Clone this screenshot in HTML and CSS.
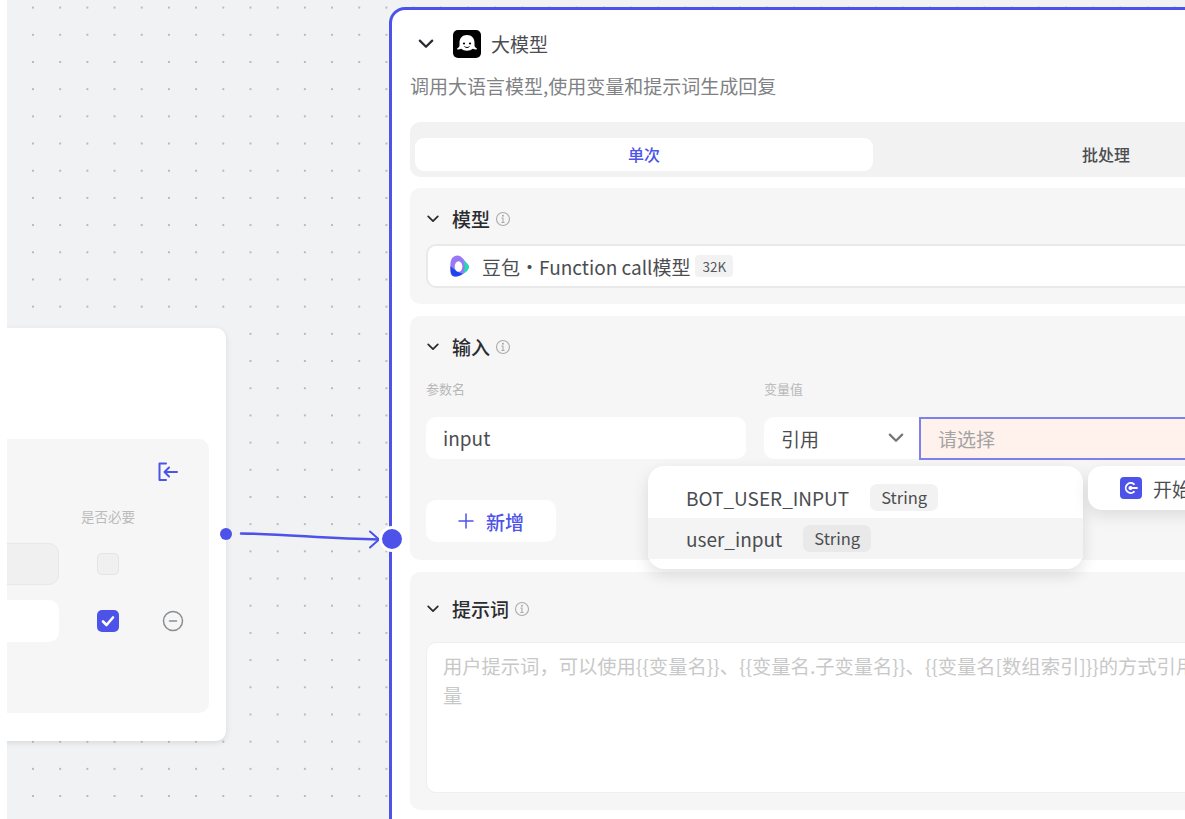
FILE: index.html
```html
<!DOCTYPE html>
<html>
<head>
    <title>大模型</title>
    <meta name="viewport" content="width=device-width, initial-scale=1.0">
    <link rel="stylesheet" href="styles.css">
</head>
<body>
    <div class="gutter"></div>
    <div class="canvas">
        <!-- start node, mostly cut off on the left -->
        <div class="node-start">
            <div class="node-inner">
                <div class="inner-head">
                    <svg class="exit-icon" viewBox="0 0 20 20" fill="none" stroke="#4d53e8" stroke-width="2" stroke-linecap="round" stroke-linejoin="round">
                        <path d="M8 1.500H1.500v16.500H8"/>
                        <path d="M19 10H6.500M11 5.500L6.500 10l4.500 4.500"/>
                    </svg>
                </div>
                <div class="required-label">是否必要</div>
                <div class="param-row">
                    <div class="param-field param-field-off"></div>
                    <div class="check check-off"></div>
                    <div class="remove-slot"></div>
                </div>
                <div class="param-row param-row-on">
                    <div class="param-field"></div>
                    <div class="check check-on">
                        <svg viewBox="0 0 22 22" fill="none" stroke="#fff" stroke-width="2.600" stroke-linecap="round" stroke-linejoin="round"><path d="M6 11.500l3.500 3.500L16 7.500"/></svg>
                    </div>
                    <div class="remove-slot">
                        <svg viewBox="0 0 22 22" fill="none" stroke="#8a8d91" stroke-width="1.500" stroke-linecap="round"><circle cx="11" cy="11" r="9.500"/><path d="M7.500 11h7"/></svg>
                    </div>
                </div>
            </div>
        </div>

        <div class="panel">
            <div class="panel-head">
                <svg class="chevron chevron-lg" viewBox="0 0 16 16"><path d="M2.500 5l5.500 5.500L13.500 5"/></svg>
                <div class="bot-icon">
                    <svg viewBox="0 0 28 28">
                        <path d="M14 5c-4.800 0-7.500 3.500-7.500 7.500v3c0 1.200-.9 2-2.100 2.800-.6.400-.4 1.100.3 1.200 1.300.1 2.400-.1 3.400-.7 1.600 1.300 3.600 1.900 5.900 1.900s4.300-.6 5.900-1.900c1 .6 2.100.8 3.400.7.700-.1.900-.8.300-1.200-1.200-.8-2.100-1.600-2.100-2.800v-3C21.500 8.500 18.800 5 14 5z" fill="#fff"/>
                        <circle cx="11" cy="13.500" r="1.100" fill="#000"/>
                        <circle cx="17" cy="13.500" r="1.100" fill="#000"/>
                        <path d="M11.800 16.800c1.300 1 3.100 1 4.400 0" stroke="#000" stroke-width="1" fill="none" stroke-linecap="round"/>
                    </svg>
                </div>
                <span class="panel-title">大模型</span>
            </div>
            <p class="panel-desc">调用大语言模型,使用变量和提示词生成回复</p>

            <div class="tabs">
                <div class="tab tab-active">单次</div>
                <div class="tab">批处理</div>
            </div>

            <div class="section section-model">
                <div class="section-head">
                    <svg class="chevron" viewBox="0 0 16 16"><path d="M2.500 5l5.500 5.500L13.500 5"/></svg>
                    <span class="section-title">模型</span>
                    <svg class="info" viewBox="0 0 16 16" fill="none" stroke="#a9abad" stroke-width="1.100"><circle cx="8" cy="8" r="6.500"/><path d="M8 7v4.500M6.800 11.500h2.400M6.800 7H8" stroke-linecap="round"/><circle cx="8" cy="4.800" r=".5"/></svg>
                </div>
                <div class="model-select">
                    <svg class="model-logo" viewBox="0 0 22 24">
                        <path d="M9 1C4 1 1.500 5 1.500 11v7c0 3 2 5 5 5 4 0 9-2.500 12.500-6 2.500-2.500 2.500-5 0-7.500C16 6 13 1 9 1z" fill="#9a78f5"/>
                        <path d="M1.500 12c0 6 .5 11 5 11 3 0 6-1.200 8-3-4-1-8-3-13-8z" fill="#1f45ee"/>
                        <path d="M14 5.500c2 1.300 3.500 2.700 5 4 2.500 2.500 2.500 5 0 7.500-1.500 1.500-3 2.500-4.500 3.300C17 17 17.500 10 14 5.500z" fill="#22dcb4"/>
                        <ellipse cx="10" cy="12.500" rx="4" ry="5.500" fill="#fff"/>
                    </svg>
                    <span class="model-name">豆包·Function call模型</span>
                    <span class="model-tag">32K</span>
                </div>
            </div>

            <div class="section section-input">
                <div class="section-head">
                    <svg class="chevron" viewBox="0 0 16 16"><path d="M2.500 5l5.500 5.500L13.500 5"/></svg>
                    <span class="section-title">输入</span>
                    <svg class="info" viewBox="0 0 16 16" fill="none" stroke="#a9abad" stroke-width="1.100"><circle cx="8" cy="8" r="6.500"/><path d="M8 7v4.500M6.800 11.500h2.400M6.800 7H8" stroke-linecap="round"/><circle cx="8" cy="4.800" r=".5"/></svg>
                </div>
                <div class="input-labels">
                    <span class="col-name">参数名</span>
                    <span>变量值</span>
                </div>
                <div class="input-row">
                    <div class="text-box col-name">input</div>
                    <div class="type-box">
                        <span>引用</span>
                        <svg class="chevron chevron-grey" viewBox="0 0 16 16"><path d="M2.500 5l5.500 5.500L13.500 5"/></svg>
                    </div>
                    <div class="ref-box">请选择</div>
                </div>
                <div class="add-btn">
                    <svg viewBox="0 0 16 16" fill="none" stroke="#4d53e8" stroke-width="1.500" stroke-linecap="round"><path d="M8 1v14M1 8h14"/></svg>
                    <span>新增</span>
                </div>
            </div>

            <div class="section section-prompt">
                <div class="section-head">
                    <svg class="chevron" viewBox="0 0 16 16"><path d="M2.500 5l5.500 5.500L13.500 5"/></svg>
                    <span class="section-title">提示词</span>
                    <svg class="info" viewBox="0 0 16 16" fill="none" stroke="#a9abad" stroke-width="1.100"><circle cx="8" cy="8" r="6.500"/><path d="M8 7v4.500M6.800 11.500h2.400M6.800 7H8" stroke-linecap="round"/><circle cx="8" cy="4.800" r=".5"/></svg>
                </div>
                <div class="prompt-box">用户提示词，可以使用{{变量名}}、{{变量名.子变量名}}、{{变量名[数组索引]}}的方式引用变量</div>
            </div>
        </div>

        <!-- connection between the two nodes, over the panel border -->
        <svg class="edge" viewBox="0 0 200 40" fill="none">
            <circle cx="19" cy="13" r="6" fill="#4d53e8"/>
            <path d="M34 12.500C80 13 120 18 172 18.500" stroke="#4d53e8" stroke-width="2.500" stroke-linecap="round"/>
            <path d="M163 10.500l9 8-9 8" stroke="#4d53e8" stroke-width="2" stroke-linecap="round" stroke-linejoin="round"/>
        </svg>
        <div class="port"></div>

        <!-- dropdown lies over the panel -->
        <div class="dropdown">
            <div class="option"><span>BOT_USER_INPUT</span><span class="type-tag">String</span></div>
            <div class="option option-hover"><span>user_input</span><span class="type-tag">String</span></div>
        </div>
        <div class="dropdown-side">
            <div class="start-icon">
                <svg viewBox="0 0 22 22" fill="none" stroke="#fff" stroke-width="1.800" stroke-linecap="round"><path d="M14 7.200a5 5 0 1 0 0 7.600"/><circle cx="10.500" cy="11" r="1.200" fill="#fff"/><path d="M11 11h6"/></svg>
            </div>
            <span>开始</span>
        </div>
    </div>
</body>
</html>
```

FILE: styles.css
```css
* {
    box-sizing: border-box;
}

html, body {
    height: 100%;
    margin: 0;
}

body {
    display: flex;
    overflow: hidden;
    background-color: #fff;
    font-family: "Noto Sans CJK SC", "Noto Sans", sans-serif;
    color: #383a3f;
}

.gutter {
    width: 7px;
    flex-shrink: 0;
}

.canvas {
    position: relative;
    flex: 1;
    overflow: hidden;
    background-color: #f1f2f4;
    background-image: radial-gradient(circle at center, #b8b9bb 0.8px, transparent 1.1px);
    background-size: 27.2px 27.2px;
    background-position: 12.4px -6px;
}

/* left node */
.node-start {
    position: absolute;
    left: -200px;
    top: 328px;
    width: 419px;
    height: 413px;
    padding: 111px 17px 28px 17px;
    background-color: #fff;
    border-radius: 10px;
    box-shadow: 0 2px 6px rgba(0, 0, 0, 0.1);
}

.node-inner {
    height: 100%;
    background-color: #f6f6f6;
    border-radius: 10px;
}

.inner-head {
    display: flex;
    justify-content: flex-end;
    height: 66px;
    padding: 23px 31px 0 0;
}

.exit-icon {
    width: 20px;
    height: 20px;
}

.required-label {
    height: 37px;
    padding-right: 74px;
    margin-top: 1px;
    font-size: 13.500px;
    line-height: 20px;
    color: #bbb;
    text-align: right;
}

.param-row {
    display: flex;
    align-items: center;
    height: 42px;
}

.param-row-on {
    margin-top: 15px;
}

.param-field {
    flex: 1;
    height: 100%;
    background-color: #fff;
    border-radius: 10px;
}

.param-field-off {
    background-color: #f0f0f0;
    border: 1px solid #e8e8e8;
}

.check {
    width: 22px;
    height: 22px;
    margin-left: 38px;
    border-radius: 5px;
}

.check-off {
    background-color: #f0f0f0;
    border: 1px solid #e4e4e4;
}

.check-on {
    background-color: #4d53e8;
}

.check svg,
.remove-slot svg {
    display: block;
    width: 22px;
    height: 22px;
}

.remove-slot {
    width: 22px;
    margin: 0 25px 0 43px;
}

/* connection */
.edge {
    position: absolute;
    left: 200px;
    top: 521px;
    width: 200px;
    height: 40px;
}

.port {
    position: absolute;
    left: 372px;
    top: 526px;
    width: 26px;
    height: 26px;
    background-color: #4d53e8;
    border: 3px solid #fff;
    border-radius: 50%;
}

/* main panel */
.panel {
    position: absolute;
    left: 382px;
    top: 7px;
    width: 972px;
    height: 830px;
    padding: 0 18px;
    background-color: #fff;
    border: 3px solid #4d53e8;
    border-radius: 16px;
}

.panel-head {
    display: flex;
    align-items: center;
    height: 48px;
    margin-top: 10px;
}

.chevron {
    width: 14px;
    height: 14px;
    flex-shrink: 0;
    fill: none;
    stroke: #2a2c30;
    stroke-width: 2;
    stroke-linecap: round;
    stroke-linejoin: round;
}

.chevron-lg {
    width: 18px;
    height: 18px;
    margin-left: 7px;
}

.chevron-grey {
    width: 18px;
    height: 18px;
    stroke: #75777b;
}

.bot-icon {
    width: 28px;
    height: 28px;
    margin-left: 18px;
    background-color: #000;
    border-radius: 5px;
}

.bot-icon svg {
    display: block;
}

.panel-title {
    margin-left: 10px;
    font-size: 19px;
    line-height: 28px;
    color: #4b4d51;
}

.panel-desc {
    height: 29px;
    margin: 3px 0 0 0;
    font-size: 19px;
    line-height: 29px;
    color: #808285;
}

.tabs {
    display: flex;
    gap: 4px;
    height: 55px;
    margin-top: 22px;
    padding: 16px 5px 6px 5px;
    background-color: #f2f2f2;
    border-radius: 10px;
}

.tab {
    flex: 1;
    font-size: 16px;
    font-weight: 500;
    line-height: 33px;
    text-align: center;
    color: #4b4d51;
}

.tab-active {
    color: #4d53e8;
    background-color: #fff;
    border-radius: 9px;
}

.section {
    margin-top: 11px;
    background-color: #f6f6f6;
    border-radius: 10px;
}

.section-model {
    height: 116px;
    padding: 16px 16px 0 16px;
}

.section-input {
    height: 244px;
    margin-top: 12px;
    padding: 16px 16px 0 16px;
}

.section-prompt {
    height: 238px;
    margin-top: 12px;
    padding: 22px 17px 0 16px;
}

.section-head {
    display: flex;
    align-items: center;
    gap: 5px;
    height: 30px;
}

.section-head .chevron {
    margin-right: 7px;
}

.section-title {
    margin-top: -2px;
    font-size: 19px;
    font-weight: 500;
    color: #2a2c30;
}

.info {
    width: 16px;
    height: 16px;
}

.model-select {
    display: flex;
    align-items: center;
    height: 44px;
    margin-top: 10px;
    padding-left: 21px;
    background-color: #fff;
    border: 2px solid #e9e9ea;
    border-radius: 10px;
}

.model-logo {
    width: 21px;
    height: 24px;
}

.model-name {
    margin-left: 12px;
    font-size: 19px;
    color: #4b4d51;
}

.model-tag {
    margin-left: 5px;
    padding: 0 7px;
    font-size: 13.500px;
    line-height: 22px;
    color: #55575b;
    background-color: #f2f2f2;
    border-radius: 4px;
}

.input-labels {
    display: flex;
    margin-top: 17px;
    font-size: 13px;
    line-height: 20px;
    color: #b8b8b8;
}

.col-name {
    width: 338px;
}

.input-row {
    display: flex;
    margin-top: 18px;
}

.text-box {
    width: 320px;
    height: 42px;
    margin-right: 18px;
    padding-left: 17px;
    font-size: 19px;
    line-height: 42px;
    color: #4b4d51;
    background-color: #fff;
    border-radius: 10px;
}

.type-box {
    display: flex;
    align-items: center;
    justify-content: space-between;
    width: 155px;
    height: 42px;
    padding: 0 14px 0 17px;
    font-size: 19px;
    color: #4b4d51;
    background-color: #fff;
    border-radius: 10px 0 0 10px;
}

.ref-box {
    flex: 1;
    height: 43px;
    padding-left: 17px;
    font-size: 19px;
    line-height: 39px;
    color: #a3a3a3;
    background-color: #fff1ec;
    border: 2px solid #7d81ee;
}

.add-btn {
    display: flex;
    align-items: center;
    gap: 12px;
    width: 130px;
    height: 42px;
    margin-top: 40px;
    padding-left: 32px;
    font-size: 19px;
    font-weight: 500;
    color: #4d53e8;
    background-color: #fff;
    border-radius: 10px;
}

.add-btn svg {
    width: 16px;
    height: 16px;
}

.prompt-box {
    height: 151px;
    margin-top: 18px;
    padding: 9px 98px 10px 16px;
    overflow: hidden;
    font-size: 19.300px;
    line-height: 29px;
    color: #c8c8c8;
    background-color: #fff;
    border: 1px solid #efefef;
    border-radius: 10px;
}

/* dropdown */
.dropdown {
    position: absolute;
    left: 641px;
    top: 466px;
    width: 435px;
    height: 103px;
    padding-top: 11px;
    background-color: #fff;
    border-radius: 16px;
    box-shadow: 0 6px 16px rgba(0, 0, 0, 0.12);
}

.option {
    display: flex;
    align-items: center;
    gap: 21px;
    height: 41px;
    padding-left: 38px;
    font-size: 19px;
    color: #4b4d51;
}

.option-hover {
    background-color: #f4f4f4;
}

.type-tag {
    padding: 0 11px;
    font-size: 16.500px;
    line-height: 27px;
    background-color: #f2f2f2;
    border-radius: 7px;
}

.option-hover .type-tag {
    background-color: #e9e9ea;
}

.dropdown-side {
    position: absolute;
    left: 1081px;
    top: 466px;
    display: flex;
    align-items: center;
    gap: 11px;
    width: 200px;
    height: 44px;
    padding-left: 32px;
    font-size: 19px;
    color: #4b4d51;
    background-color: #fff;
    border-radius: 14px;
    box-shadow: 0 6px 16px rgba(0, 0, 0, 0.1);
}

.start-icon {
    width: 22px;
    height: 22px;
    background-color: #4d53e8;
    border-radius: 4px;
}

.start-icon svg {
    display: block;
}
```
